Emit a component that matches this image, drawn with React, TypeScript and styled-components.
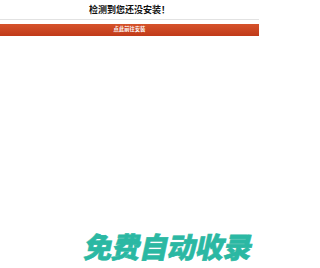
import React from "react";
import styled, { createGlobalStyle } from "styled-components";

const Global = createGlobalStyle`
  html, body { margin: 0; padding: 0; background: #ffffff; }
  body { font-family: "Noto Sans CJK SC", "Noto Sans", sans-serif; }
`;

const Page = styled.div`
  width: 259px;
  height: 268px;
  display: flex;
  flex-direction: column;
  overflow: hidden;
`;

const Header = styled.div`
  height: 19px;
  border-bottom: 1px solid #e2e2e2;
  display: flex;
  align-items: center;
  justify-content: center;
`;

const Title = styled.h1`
  margin: 0;
  font-size: 9px;
  line-height: 1;
  font-weight: 700;
  color: #111111;
  letter-spacing: 0;
`;

const InstallBar = styled.a`
  margin-top: 4px;
  height: 12px;
  display: flex;
  align-items: center;
  justify-content: center;
  background: linear-gradient(#d6532b, #c03a19);
  text-decoration: none;
`;

const BarText = styled.span`
  font-size: 5.3px;
  line-height: 1;
  color: #ffffff;
  font-weight: 700;
`;

const Spacer = styled.div`
  flex: 1;
`;

const Slogan = styled.div`
  align-self: flex-start;
  margin-left: 82px;
  margin-bottom: 7px;
  white-space: nowrap;
  font-size: 28.5px;
  line-height: 30px;
  font-weight: 900;
  letter-spacing: -0.6px;
  color: #2bb8a3;
  -webkit-text-stroke: 0.6px #2bb8a3;
  transform: skewX(-12deg);
  transform-origin: left bottom;
`;

export default function App() {
  return (
    <Page>
      <Global />
      <Header>
        <Title>检测到您还没安装！</Title>
      </Header>
      <InstallBar href="#">
        <BarText>点此前往安装</BarText>
      </InstallBar>
      <Spacer />
      <Slogan>免费自动收录</Slogan>
    </Page>
  );
}
